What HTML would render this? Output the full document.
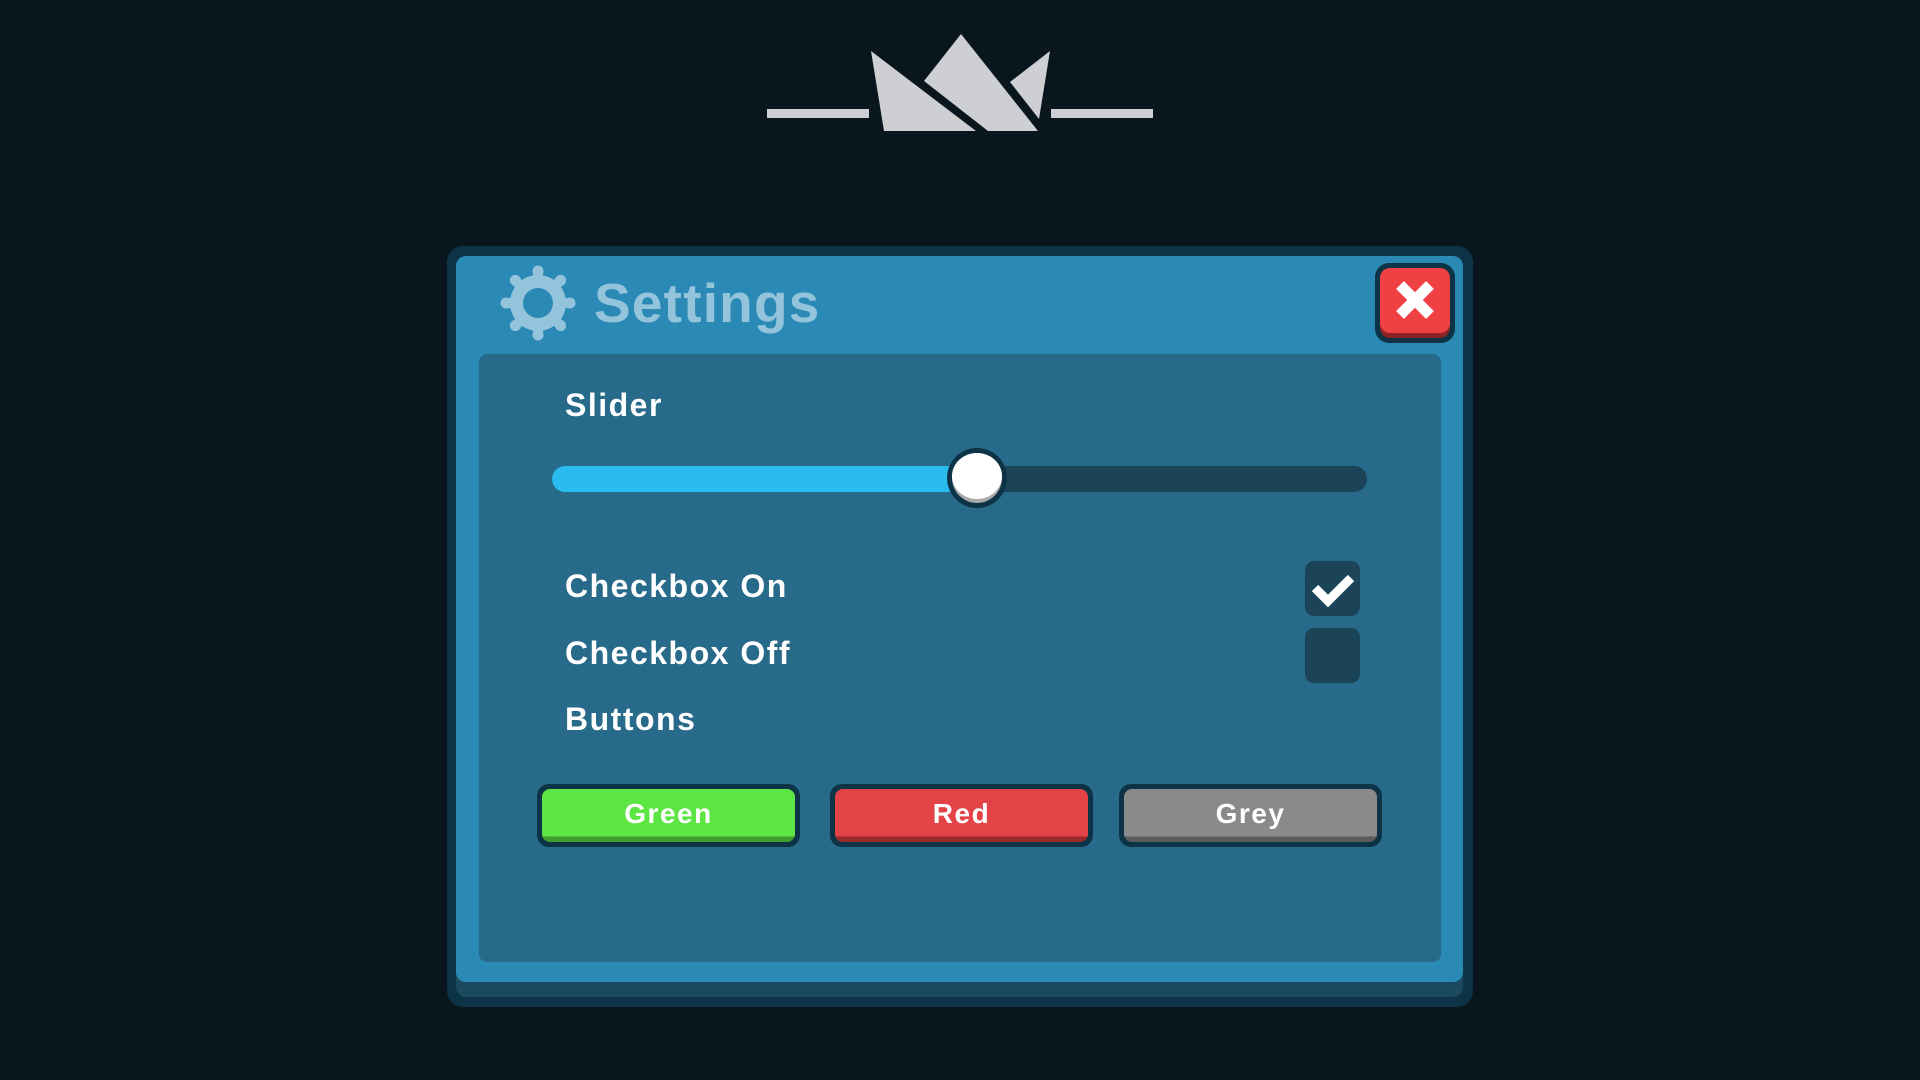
<!DOCTYPE html>
<html><head><meta charset="utf-8"><style>
*{margin:0;padding:0;box-sizing:border-box}
body{width:1920px;height:1080px;background:#0a161d;position:relative;overflow:hidden;font-family:"Liberation Sans",sans-serif;font-weight:bold}
.a{position:absolute}
.lbl{position:absolute;left:565px;color:#fff;font-size:32px;line-height:40px;letter-spacing:1.5px}
.cb{position:absolute;left:1305px;width:55px;height:55px;background:#1c4459;border-radius:9px}
.btn{position:absolute;top:784px;height:63px;width:263px;background:#0c3346;border-radius:12px;padding:5px}
.btn div{width:100%;height:100%;border-radius:8px;color:#fff;font-size:28px;text-align:center;line-height:50px;letter-spacing:1.5px}
</style></head><body>
<svg class="a" style="left:740px;top:0" width="440" height="160" viewBox="740 0 440 160">
<g fill="#cdcfd2">
<rect x="767" y="109" width="102" height="9"/>
<rect x="1051" y="109" width="102" height="9"/>
<polygon points="871,51 976,131 884,131"/>
<polygon points="961,34 1038,131 988,131 924,81"/>
<polygon points="1050,51 1039,119 1010,82"/>
</g></svg>
<div class="a" style="left:447px;top:246px;width:1026px;height:761px;background:#0c3346;border-radius:16px"></div>
<div class="a" style="left:456px;top:256px;width:1007px;height:741px;background:#1b4a60;border-radius:10px"></div>
<div class="a" style="left:456px;top:256px;width:1007px;height:726px;background:#2b8ab5;border-radius:10px"></div>
<div class="a" style="left:479px;top:354px;width:962px;height:608px;background:#276a89;border-radius:8px"></div>
<svg class="a" style="left:498px;top:263px" width="80" height="80" viewBox="-40 -40 80 80">
<g fill="#93c4dc">
<circle r="28"/>
<g id="t"><circle cx="0" cy="-32" r="5.5"/><rect x="-5" y="-32" width="10" height="10"/></g>
<use href="#t" transform="rotate(45)"/><use href="#t" transform="rotate(90)"/><use href="#t" transform="rotate(135)"/>
<use href="#t" transform="rotate(180)"/><use href="#t" transform="rotate(225)"/><use href="#t" transform="rotate(270)"/><use href="#t" transform="rotate(315)"/>
</g><circle r="15" fill="#2b8ab5"/></svg>
<div class="a" style="left:594px;top:268px;font-size:55px;color:#93c4dc;line-height:70px;letter-spacing:1.2px">Settings</div>
<div class="a" style="left:1375px;top:263px;width:80px;height:80px;background:#0c3346;border-radius:14px"></div>
<div class="a" style="left:1380px;top:268px;width:70px;height:70px;background:#8a2226;border-radius:10px"></div>
<div class="a" style="left:1380px;top:268px;width:70px;height:65px;background:#ef4044;border-radius:10px"></div>
<svg class="a" style="left:1393px;top:278px" width="44" height="44" viewBox="0 0 44 44"><g stroke="#fff" stroke-width="11"><line x1="7" y1="7" x2="37" y2="37"/><line x1="37" y1="7" x2="7" y2="37"/></g></svg>
<div class="lbl" style="top:385px">Slider</div>
<div class="a" style="left:552px;top:466px;width:815px;height:26px;background:#1c4459;border-radius:13px"></div>
<div class="a" style="left:552px;top:466px;width:430px;height:26px;background:#2bbcef;border-radius:13px 0 0 13px"></div>
<div class="a" style="left:947px;top:448px;width:60px;height:60px;background:#0c3346;border-radius:50%"></div>
<div class="a" style="left:952px;top:453px;width:50px;height:50px;background:#a9a9ab;border-radius:50%"></div>
<div class="a" style="left:952px;top:453px;width:50px;height:46px;background:#fff;border-radius:50%"></div>
<div class="lbl" style="top:566px">Checkbox On</div>
<div class="lbl" style="top:633px">Checkbox Off</div>
<div class="lbl" style="top:699px">Buttons</div>
<div class="cb" style="top:561px"></div>
<svg class="a" style="left:1310px;top:570px" width="46" height="40" viewBox="0 0 46 40"><polyline points="5,18 18,31 41,8" fill="none" stroke="#fff" stroke-width="9"/></svg>
<div class="cb" style="top:628px"></div>
<div class="btn" style="left:537px"><div style="background:linear-gradient(#5ce543 90%,#3e9e2c 90%)">Green</div></div>
<div class="btn" style="left:830px"><div style="background:linear-gradient(#e34346 90%,#9b2a2d 90%)">Red</div></div>
<div class="btn" style="left:1119px"><div style="background:linear-gradient(#8a8a8a 90%,#5c5c5c 90%)">Grey</div></div>
</body></html>
